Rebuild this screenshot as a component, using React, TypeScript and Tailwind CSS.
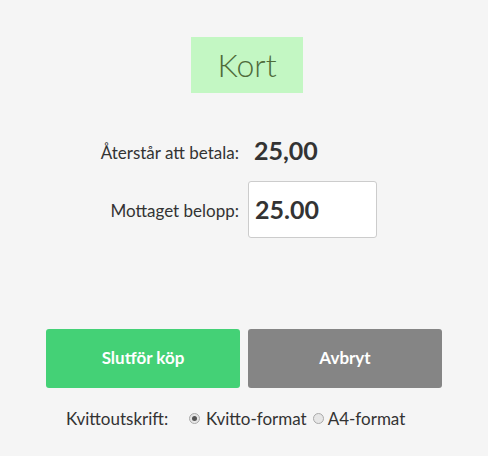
export default function App() {
  return (
    <div
      className="flex h-[456px] w-[488px] flex-col items-center bg-[#f5f5f5] text-[#333]"
      style={{ fontFamily: "Lato, 'Liberation Sans', sans-serif" }}
    >
      <div className="ml-[6px] mt-[37px] flex h-[56px] w-[112px] items-center justify-center bg-[#c3f7c3] text-[32px] font-light text-[#4f6b3a]">
        Kort
      </div>

      <div className="mt-[39px] grid w-full grid-cols-[239px_1fr] items-center gap-x-[9px]">
        <span className="pt-[4px] text-right text-[17px]">Återstår att betala:</span>
        <span className="pl-[6px] text-[25px] font-bold">25,00</span>
      </div>

      <div className="mt-[11px] grid w-full grid-cols-[239px_1fr] items-center gap-x-[9px]">
        <span className="pt-[4px] text-right text-[17px]">Mottaget belopp:</span>
        <input
          defaultValue="25.00"
          className="h-[57px] w-[129px] rounded-[3px] border border-[#ccc] bg-white px-[6px] text-[25px] font-bold text-[#333] outline-none"
        />
      </div>

      <div className="mt-[91px] flex gap-[8px]">
        <button className="h-[59px] w-[194px] rounded-[3px] bg-[#44d176] text-[17px] font-bold text-white">
          Slutför köp
        </button>
        <button className="h-[59px] w-[194px] rounded-[3px] bg-[#858585] text-[17px] font-bold text-white">
          Avbryt
        </button>
      </div>

      <div className="mt-[18px] flex w-full items-center pl-[66px] text-[17px]">
        <span className="w-[123px]">Kvittoutskrift:</span>
        <label className="flex items-center gap-[6px]">
          <Radio checked />
          Kvitto-format
        </label>
        <label className="ml-[6px] flex items-center gap-[4px]">
          <Radio />
          A4-format
        </label>
      </div>
    </div>
  );
}

function Radio({ checked = false }: { checked?: boolean }) {
  return (
    <span className="flex h-[11px] w-[11px] items-center justify-center rounded-full border border-[#aaa] bg-[#e6e6e6]">
      {checked && <span className="h-[5px] w-[5px] rounded-full bg-[#555]" />}
    </span>
  );
}
